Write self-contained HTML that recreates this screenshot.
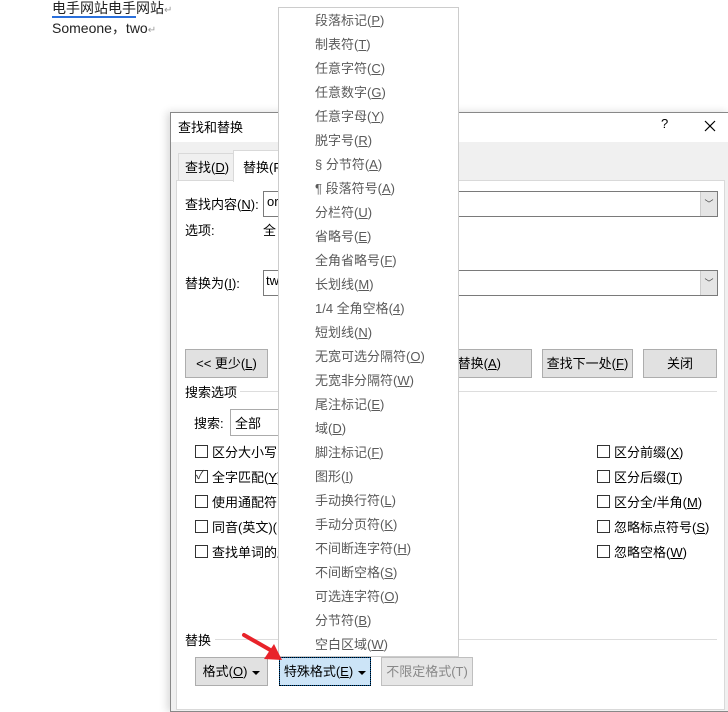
<!DOCTYPE html>
<html><head><meta charset="utf-8"><style>
*{margin:0;padding:0;box-sizing:border-box}
body{width:728px;height:704px;overflow:hidden;background:#fff;position:relative;font-family:"Liberation Sans","Microsoft YaHei","Noto Sans CJK SC",sans-serif;font-size:13px;color:#000}
.a{position:absolute;white-space:nowrap}
.u{text-decoration:underline}
.btn{position:absolute;background:#e1e1e1;border:1px solid #adadad;text-align:center;line-height:27px}
.cb{position:absolute;width:13px;height:13px;border:1px solid #333;background:#fff}
.mi{position:absolute;left:315px;color:#5a5a5a;font-size:13px}
.tri{display:inline-block;width:0;height:0;border-left:4px solid transparent;border-right:4px solid transparent;border-top:4px solid #000;vertical-align:middle;margin-left:5px}
</style></head><body>
<div class="a" style="left:52px;top:-2px;font-size:14px;color:#222"><span style="border-bottom:2px solid #2a6fdb">电手网站电手</span>网站<span style="color:#999;font-size:10px">↵</span></div>
<div class="a" style="left:52px;top:18px;font-size:14px;color:#222">Someone，two<span style="color:#999;font-size:10px">↵</span></div>

<div class="a" style="left:170px;top:112px;width:560px;height:600px;background:#f0f0f0;border:1px solid #888;box-shadow:-3px 0 8px rgba(0,0,0,.15)"></div>
<div class="a" style="left:171px;top:113px;width:557px;height:29px;background:#fff"></div>
<div class="a" style="left:178px;top:117px">查找和替换</div>
<div class="a" style="left:661px;top:116px">?</div>
<svg class="a" style="left:704px;top:120px" width="12" height="12"><path d="M1 1L11 11M11 1L1 11" stroke="#000" stroke-width="1.2"/></svg>
<div class="a" style="left:178px;top:153px;width:56px;height:28px;background:#f0f0f0;border:1px solid #d9d9d9;border-bottom:none"></div>
<div class="a" style="left:185px;top:157px">查找(<span class="u">D</span>)</div>
<div class="a" style="left:176px;top:180px;width:549px;height:530px;background:#fff;border:1px solid #d9d9d9"></div>
<div class="a" style="left:233px;top:150px;width:60px;height:32px;background:#fff;border:1px solid #d9d9d9;border-bottom:none"></div>
<div class="a" style="left:243px;top:157px">替换(P)</div>

<div class="a" style="left:185px;top:194px">查找内容(<span class="u">N</span>):</div>
<div class="a" style="left:263px;top:191px;width:455px;height:26px;border:1px solid #7a7a7a;background:#fff"></div>
<div class="a" style="left:700px;top:192px;width:17px;height:24px;background:#e5e5e5;border-left:1px solid #ccc;font-size:9px;text-align:center;line-height:24px;color:#444">﹀</div>
<div class="a" style="left:267px;top:194px">or</div>
<div class="a" style="left:185px;top:220px">选项:</div>
<div class="a" style="left:263px;top:220px">全</div>
<div class="a" style="left:185px;top:273px">替换为(<span class="u">I</span>):</div>
<div class="a" style="left:263px;top:270px;width:455px;height:26px;border:1px solid #7a7a7a;background:#fff"></div>
<div class="a" style="left:700px;top:271px;width:17px;height:24px;background:#e5e5e5;border-left:1px solid #ccc;font-size:9px;text-align:center;line-height:24px;color:#444">﹀</div>
<div class="a" style="left:266px;top:273px">tw</div>

<div class="btn" style="left:185px;top:349px;width:83px;height:29px">&lt;&lt; 更少(<span class="u">L</span>)</div>
<div class="btn" style="left:440px;top:349px;width:92px;height:29px;text-align:right;padding-right:30px">替换(<span class="u">A</span>)</div>
<div class="btn" style="left:542px;top:349px;width:91px;height:29px">查找下一处(<span class="u">F</span>)</div>
<div class="btn" style="left:643px;top:349px;width:74px;height:29px">关闭</div>

<div class="a" style="left:185px;top:382px">搜索选项</div>
<div class="a" style="left:240px;top:391px;width:477px;height:1px;background:#ddd"></div>
<div class="a" style="left:194px;top:413px">搜索:</div>
<div class="a" style="left:230px;top:409px;width:60px;height:27px;border:1px solid #ababab;background:#fff"></div>
<div class="a" style="left:235px;top:413px">全部</div>

<div class="cb" style="left:195px;top:445px"></div><div class="a" style="left:212px;top:442px">区分大小写</div>
<div class="cb" style="left:195px;top:470px"></div><div class="a" style="left:196px;top:466px;font-size:12px;color:#333">✓</div><div class="a" style="left:212px;top:467px">全字匹配(<span class="u">Y</span>)</div>
<div class="cb" style="left:195px;top:495px"></div><div class="a" style="left:212px;top:492px">使用通配符</div>
<div class="cb" style="left:195px;top:520px"></div><div class="a" style="left:212px;top:517px">同音(英文)(K</div>
<div class="cb" style="left:195px;top:545px"></div><div class="a" style="left:212px;top:542px">查找单词的所</div>

<div class="cb" style="left:597px;top:445px"></div><div class="a" style="left:614px;top:442px">区分前缀(<span class="u">X</span>)</div>
<div class="cb" style="left:597px;top:470px"></div><div class="a" style="left:614px;top:467px">区分后缀(<span class="u">T</span>)</div>
<div class="cb" style="left:597px;top:495px"></div><div class="a" style="left:614px;top:492px">区分全/半角(<span class="u">M</span>)</div>
<div class="cb" style="left:597px;top:520px"></div><div class="a" style="left:614px;top:517px">忽略标点符号(<span class="u">S</span>)</div>
<div class="cb" style="left:597px;top:545px"></div><div class="a" style="left:614px;top:542px">忽略空格(<span class="u">W</span>)</div>

<div class="a" style="left:185px;top:630px">替换</div>
<div class="a" style="left:215px;top:639px;width:502px;height:1px;background:#ddd"></div>
<div class="btn" style="left:195px;top:657px;width:73px;height:29px">格式(<span class="u">O</span>)<span class="tri"></span></div>
<div class="btn" style="left:279px;top:657px;width:92px;height:29px;background:#cce4f7;border:1px solid #005499;outline:1px dotted #000;outline-offset:-1px">特殊格式(<span class="u">E</span>)<span class="tri"></span></div>
<div class="btn" style="left:381px;top:657px;width:92px;height:29px;color:#888;border-color:#bfbfbf;background:#e6e6e6">不限定格式(T)</div>

<div class="a" style="left:278px;top:7px;width:181px;height:650px;background:#fff;border:1px solid #ccc"></div>
<div class="mi" style="top:10px">段落标记(<span class="u">P</span>)</div>
<div class="mi" style="top:34px">制表符(<span class="u">T</span>)</div>
<div class="mi" style="top:58px">任意字符(<span class="u">C</span>)</div>
<div class="mi" style="top:82px">任意数字(<span class="u">G</span>)</div>
<div class="mi" style="top:106px">任意字母(<span class="u">Y</span>)</div>
<div class="mi" style="top:130px">脱字号(<span class="u">R</span>)</div>
<div class="mi" style="top:154px">§ 分节符(<span class="u">A</span>)</div>
<div class="mi" style="top:178px">¶ 段落符号(<span class="u">A</span>)</div>
<div class="mi" style="top:202px">分栏符(<span class="u">U</span>)</div>
<div class="mi" style="top:226px">省略号(<span class="u">E</span>)</div>
<div class="mi" style="top:250px">全角省略号(<span class="u">F</span>)</div>
<div class="mi" style="top:274px">长划线(<span class="u">M</span>)</div>
<div class="mi" style="top:298px">1/4 全角空格(<span class="u">4</span>)</div>
<div class="mi" style="top:322px">短划线(<span class="u">N</span>)</div>
<div class="mi" style="top:346px">无宽可选分隔符(<span class="u">O</span>)</div>
<div class="mi" style="top:370px">无宽非分隔符(<span class="u">W</span>)</div>
<div class="mi" style="top:394px">尾注标记(<span class="u">E</span>)</div>
<div class="mi" style="top:418px">域(<span class="u">D</span>)</div>
<div class="mi" style="top:442px">脚注标记(<span class="u">F</span>)</div>
<div class="mi" style="top:466px">图形(<span class="u">I</span>)</div>
<div class="mi" style="top:490px">手动换行符(<span class="u">L</span>)</div>
<div class="mi" style="top:514px">手动分页符(<span class="u">K</span>)</div>
<div class="mi" style="top:538px">不间断连字符(<span class="u">H</span>)</div>
<div class="mi" style="top:562px">不间断空格(<span class="u">S</span>)</div>
<div class="mi" style="top:586px">可选连字符(<span class="u">O</span>)</div>
<div class="mi" style="top:610px">分节符(<span class="u">B</span>)</div>
<div class="mi" style="top:634px">空白区域(<span class="u">W</span>)</div>

<svg class="a" style="left:238px;top:630px" width="50" height="36" viewBox="0 0 50 36">
<line x1="6" y1="5" x2="34" y2="21" stroke="#e8232a" stroke-width="4" stroke-linecap="round"/>
<polygon points="44,30 26,29 36,14" fill="#e8232a"/>
</svg>
</body></html>
